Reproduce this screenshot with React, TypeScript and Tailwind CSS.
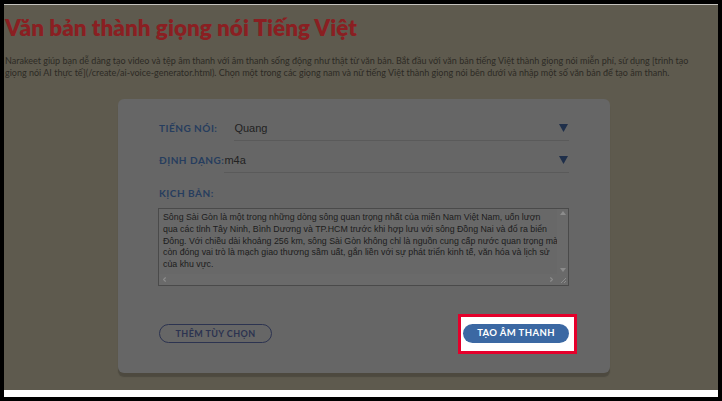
import { ChevronLeft, ChevronRight } from "lucide-react"

const intro1 =
  "Narakeet giúp bạn dễ dàng tạo video và tệp âm thanh với âm thanh sống động như thật từ văn bản. Bắt đầu với văn bản tiếng Việt thành giọng nói miễn phí, sử dụng [trình tạo"
const intro2 =
  "giọng nói AI thực tế](/create/ai-voice-generator.html). Chọn một trong các giọng nam và nữ tiếng Việt thành giọng nói bên dưới và nhập một số văn bản để tạo âm thanh."

const script = [
  "Sông Sài Gòn là một trong những dòng sông quan trọng nhất của miền Nam Việt Nam, uốn lượn",
  "qua các tỉnh Tây Ninh, Bình Dương và TP.HCM trước khi hợp lưu với sông Đồng Nai và đổ ra biển",
  "Đông. Với chiều dài khoảng 256 km, sông Sài Gòn không chỉ là nguồn cung cấp nước quan trọng mà",
  "còn đóng vai trò là mạch giao thương sầm uất, gắn liền với sự phát triển kinh tế, văn hóa và lịch sử",
  "của khu vực.",
]

function Caret() {
  return (
    <svg width="9" height="8" viewBox="0 0 9 8" className="mr-[1px]">
      <path d="M0 0h9L4.5 8z" fill="#1f2f4a" />
    </svg>
  )
}

function SelectRow({ label, value, gap }: { label: string; value: string; gap?: boolean }) {
  return (
    <div className="flex h-[25px] items-center">
      <span className="text-[10px] font-bold tracking-[0.5px] text-[#263d5e]">{label}</span>
      <div
        className={`flex h-full flex-1 items-center justify-between border-b border-[#5a5a5a] ${gap ? "ml-[17px]" : ""}`}
      >
        <span className="font-['Liberation_Sans',sans-serif] text-[11px] text-[#222222]">{value}</span>
        <Caret />
      </div>
    </div>
  )
}

export default function App() {
  return (
    <div className="h-[401px] w-[722px] bg-black p-[4px] font-['Lato',sans-serif]">
      <div className="flex h-[393px] w-[714px] flex-col bg-[#5e5a4e]">
        <div className="h-[1px] bg-[#c4c2bd]" />
        <h1 className="mt-[9px] pl-[1px] text-[22.5px] font-extrabold leading-[28px] text-[#8a1f22]">
          Văn bản thành giọng nói Tiếng Việt
        </h1>
        <p className="mt-[13px] whitespace-nowrap pl-[1px] text-[9px] leading-[11.5px] text-[#2d2a25]">
          {intro1}
          <br />
          {intro2}
        </p>

        {/* form card */}
        <div className="ml-[114px] mt-[21px] w-[492px] rounded-md bg-[#666666] px-[41px] pb-[30px] pt-[17px] shadow-[0_4px_1px_rgba(0,0,0,0.18)]">
          <SelectRow label="TIẾNG NÓI:" value="Quang" gap />
          <div className="mt-[7px]">
            <SelectRow label="ĐỊNH DẠNG:" value="m4a" />
          </div>
          <div className="mt-[12px] text-[10px] font-bold leading-[16px] tracking-[0.5px] text-[#263d5e]">
            KỊCH BẢN:
          </div>

          <div className="mt-[7px] flex h-[78px] w-[411px] -translate-x-[1px] flex-col border border-[#4a4a4a] bg-[#686868]">
            <div className="flex flex-1">
              <div className="flex-1 overflow-hidden whitespace-nowrap px-[4px] pt-[3px] font-['Liberation_Sans',sans-serif] text-[8.8px] leading-[11.8px] text-[#1c1c1c]">
                {script.map((line) => (
                  <div key={line}>{line}</div>
                ))}
              </div>
              <div className="flex w-[11px] flex-col items-center justify-between bg-[#6a6a6a] py-[2px] text-[#8c8c8c]">
                <svg width="6" height="4" viewBox="0 0 6 4">
                  <path d="M0 4h6L3 0z" fill="currentColor" />
                </svg>
                <svg width="6" height="4" viewBox="0 0 6 4">
                  <path d="M0 0h6L3 4z" fill="currentColor" />
                </svg>
              </div>
            </div>
            <div className="flex h-[11px]">
              <div className="flex flex-1 items-center justify-between bg-[#6a6a6a] px-[2px] text-[#8c8c8c]">
                <ChevronLeft size={7} strokeWidth={4} />
                <ChevronRight size={7} strokeWidth={4} />
              </div>
              <div className="relative w-[11px] bg-[#6a6a6a]">
                <svg width="8" height="8" viewBox="0 0 8 8" className="absolute bottom-[1px] right-[1px]">
                  <path d="M7 2L2 7M7 5L5 7" stroke="#8c8c8c" strokeWidth="1" />
                </svg>
              </div>
            </div>
          </div>

          <div className="mt-[38px] flex items-center justify-between">
            <button className="flex h-[19px] w-[113px] items-center justify-center rounded-full border border-[#2c3350] text-[9px] font-bold tracking-[0.4px] text-[#2c3350]">
              THÊM TÙY CHỌN
            </button>
            <div className="relative">
              {/* spotlight highlight */}
              <div className="absolute -bottom-[11px] -left-[5px] -right-[8px] -top-[10px] border-[3px] border-[#e4002b] bg-white" />
              <button className="relative flex h-[19px] w-[106px] items-center justify-center rounded-full bg-[#3b68a3] text-[9.5px] font-bold tracking-[0.4px] text-white">
                TẠO ÂM THANH
              </button>
            </div>
          </div>
        </div>

        <div className="flex-1" />
        <div className="h-[7px] bg-white" />
      </div>
    </div>
  )
}
